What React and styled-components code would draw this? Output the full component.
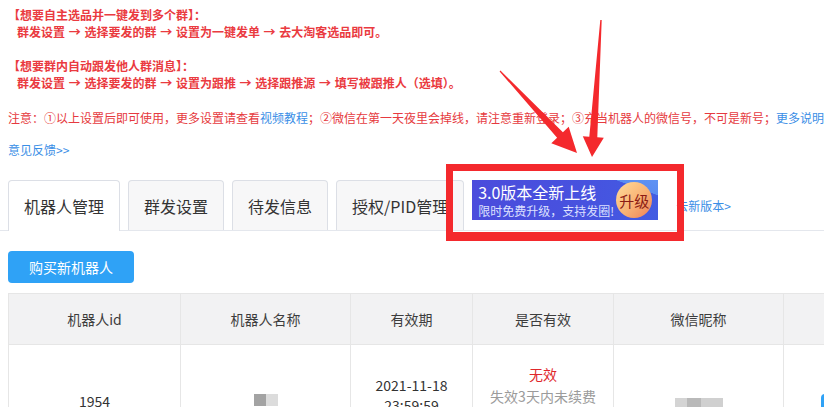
import React from "react";
import styled, { createGlobalStyle } from "styled-components";

const GlobalStyle = createGlobalStyle`
  html, body { margin: 0; padding: 0; background: #fff; }
  body {
    font-family: "Noto Sans CJK SC", "Liberation Sans", sans-serif;
    width: 824px; height: 407px; overflow: hidden;
  }
  #root { width: 824px; height: 407px; overflow: hidden; }
`;

const Page = styled.div`
  position: relative;
  width: 824px;
  height: 407px;
  overflow: hidden;
`;

const Intro = styled.div`
  padding: 6px 8px 0;
  font-size: 12px;
  line-height: 17px;
  font-weight: 700;
  color: #ea3a40;
  white-space: pre;
`;

const IntroLine = styled.div`
  min-height: 17px;
  padding-left: ${(p) => (p.$indent ? 9 : 0)}px;
  word-spacing: 1px;
`;

const Notice = styled.div`
  margin-top: 18px;
  padding: 0 8px;
  font-size: 12px;
  line-height: 17px;
  color: #e63a40;
  white-space: nowrap;
`;

const TextLink = styled.a`
  color: #3a8ee6;
  text-decoration: none;
`;

const Feedback = styled.div`
  margin-top: 15px;
  padding: 0 8px;
  font-size: 12px;
  line-height: 17px;
`;

const TabBar = styled.div`
  margin-top: 22px;
  height: 50px;
  display: flex;
  align-items: flex-start;
  gap: 8px;
  padding-left: 8px;
  border-bottom: 1px solid #e4e7ed;
`;

const Tab = styled.div`
  box-sizing: border-box;
  height: ${(p) => (p.$active ? 51 : 50)}px;
  padding: 0 15px;
  display: flex;
  align-items: center;
  border: 1px solid #dcdfe6;
  border-bottom: none;
  border-radius: 4px 4px 0 0;
  background: ${(p) => (p.$active ? "#fff" : "#f7f7f8")};
  font-size: 16px;
  color: #333;
  white-space: nowrap;
`;

const PromoTab = styled.div`
  height: 50px;
  display: flex;
  align-items: center;
`;

const Banner = styled.div`
  align-self: flex-start;
  box-sizing: border-box;
  width: 186px;
  height: 40px;
  padding: 0 6px;
  display: flex;
  align-items: center;
  background:
    linear-gradient(200deg, #5f93f3 0%, #5a8cf1 14%, rgba(90, 140, 241, 0) 14.5%),
    linear-gradient(90deg, #4b4cdc 0%, #4752df 60%, #425ce2 100%);
`;

const BannerText = styled.div`
  display: flex;
  flex-direction: column;
  gap: 1px;
`;

const BannerTitle = styled.div`
  font-size: 16px;
  line-height: 19px;
  color: #fff;
  white-space: nowrap;
`;

const BannerSub = styled.div`
  font-size: 12px;
  line-height: 15px;
  color: #dde0ff;
  white-space: nowrap;
`;

const UpgradeBadge = styled.div`
  margin-left: auto;
  width: 36px;
  height: 36px;
  border-radius: 50%;
  background: linear-gradient(135deg, #ffdc9a 0%, #f8b274 55%, #ef7f55 100%);
  color: #8c1b14;
  font-size: 15px;
  display: flex;
  align-items: center;
  justify-content: center;
`;

const NewVersionLink = styled.a`
  margin-left: 18px;
  font-size: 12px;
  color: #3a8ee6;
  text-decoration: none;
  white-space: nowrap;
`;

const BuyButton = styled.button`
  display: block;
  margin: 20px 0 0 8px;
  width: 126px;
  height: 32px;
  border: none;
  border-radius: 4px;
  background: #2fa2f6;
  color: #fff;
  font-family: inherit;
  font-size: 14px;
  padding: 0;
`;

const Table = styled.table`
  margin: 10px 0 0 8px;
  border-collapse: collapse;
  table-layout: fixed;
  width: 1100px;
`;

const HeadCell = styled.th`
  height: 50px;
  padding: 0;
  background: #f2f2f3;
  border: 1px solid #e6e6e6;
  font-weight: 400;
  font-size: 14px;
  color: #3d3d3d;
  text-align: center;
`;

const ROW_H = 111;

const Cell = styled.td`
  height: ${(p) => ROW_H - (p.$lift || 0) - (p.$drop || 0)}px;
  padding: ${(p) => p.$drop || 0}px 0 ${(p) => p.$lift || 0}px ${(p) => p.$left || 0}px;
  border: 1px solid #e6e6e6;
  font-size: 14px;
  color: #333;
  text-align: ${(p) => (p.$left ? "left" : "center")};
  vertical-align: middle;
`;

const Stack = styled.div`
  display: flex;
  flex-direction: column;
  align-items: center;
  line-height: ${(p) => p.$lh}px;
`;

const Invalid = styled.span`
  color: #e0282c;
`;

const Muted = styled.span`
  color: #9b9b9b;
`;

const Mosaic = styled.div`
  display: inline-flex;
  vertical-align: middle;
  width: ${(p) => p.$w}px;
  height: ${(p) => p.$h}px;
  background: ${(p) => p.$bg};
  filter: blur(0.6px);
`;

const ActionButton = styled.button`
  height: 28px;
  padding: 0 12px;
  border: none;
  border-radius: 4px;
  background: #2fa2f6;
  color: #fff;
  font-family: inherit;
  font-size: 12px;
`;

const RedFrame = styled.div`
  position: absolute;
  left: 446px;
  top: 164px;
  width: 238px;
  height: 77px;
  box-sizing: border-box;
  border: 7px solid #f4292d;
  border-bottom-width: 9px;
  pointer-events: none;
`;

const ArrowLayer = styled.svg`
  position: absolute;
  left: 0;
  top: 0;
  pointer-events: none;
`;

export default function App() {
  return (
    <Page>
      <GlobalStyle />
      <Intro>
        <IntroLine>【想要自主选品并一键发到多个群】：</IntroLine>
        <IntroLine $indent>群发设置 → 选择要发的群 → 设置为一键发单 → 去大淘客选品即可。</IntroLine>
        <IntroLine />
        <IntroLine>【想要群内自动跟发他人群消息】：</IntroLine>
        <IntroLine $indent>群发设置 → 选择要发的群 → 设置为跟推 → 选择跟推源 → 填写被跟推人（选填）。</IntroLine>
      </Intro>
      <Notice>
        注意：①以上设置后即可使用，更多设置请查看<TextLink>视频教程</TextLink>；②微信在第一天夜里会掉线，请注意重新登录；③充当机器人的微信号，不可是新号；<TextLink>更多说明</TextLink>
      </Notice>
      <Feedback>
        <TextLink>意见反馈&gt;&gt;</TextLink>
      </Feedback>
      <TabBar>
        <Tab $active>机器人管理</Tab>
        <Tab>群发设置</Tab>
        <Tab>待发信息</Tab>
        <Tab>授权/PID管理</Tab>
        <PromoTab>
          <Banner>
            <BannerText>
              <BannerTitle>3.0版本全新上线</BannerTitle>
              <BannerSub>限时免费升级，支持发圈!</BannerSub>
            </BannerText>
            <UpgradeBadge>升级</UpgradeBadge>
          </Banner>
          <NewVersionLink>去新版本&gt;</NewVersionLink>
        </PromoTab>
      </TabBar>
      <BuyButton>购买新机器人</BuyButton>
      <Table>
        <colgroup>
          <col style={{ width: 172 }} />
          <col style={{ width: 170 }} />
          <col style={{ width: 122 }} />
          <col style={{ width: 141 }} />
          <col style={{ width: 170 }} />
          <col style={{ width: 325 }} />
        </colgroup>
        <thead>
          <tr>
            <HeadCell>机器人id</HeadCell>
            <HeadCell>机器人名称</HeadCell>
            <HeadCell>有效期</HeadCell>
            <HeadCell>是否有效</HeadCell>
            <HeadCell>微信昵称</HeadCell>
            <HeadCell>操作</HeadCell>
          </tr>
        </thead>
        <tbody>
          <tr>
            <Cell>1954</Cell>
            <Cell $lift={6}>
              <Mosaic $w={24} $h={12} $bg="linear-gradient(90deg, #a3a3a3 0 50%, #dcdcdc 50% 100%)" />
            </Cell>
            <Cell $lift={12}>
              <Stack $lh={20}>
                <span>2021-11-18</span>
                <span>23:59:59</span>
              </Stack>
            </Cell>
            <Cell $lift={32}>
              <Stack $lh={22}>
                <Invalid>无效</Invalid>
                <Muted>失效3天内未续费</Muted>
              </Stack>
            </Cell>
            <Cell>
              <Mosaic $w={48} $h={10} $bg="linear-gradient(90deg, #d4d4d4 0 25%, #b9b9b9 25% 55%, #d0d0d0 55% 100%)" />
            </Cell>
            <Cell $left={37} $drop={14}>
              <ActionButton>续费</ActionButton>
            </Cell>
          </tr>
        </tbody>
      </Table>
      <RedFrame />
      <ArrowLayer width="824" height="407" viewBox="0 0 824 407">
        <polygon
          fill="#f4292d"
          points="500.4,70.6 562.9,132.3 568.7,126.8 577,153 551.3,143.2 557.1,137.7 499.6,71.4"
        />
        <polygon
          fill="#f4292d"
          points="600.3,20 589.3,136.7 582.8,136.3 592,157 603.8,137.7 597.3,137.3 601.7,20"
        />
      </ArrowLayer>
    </Page>
  );
}
